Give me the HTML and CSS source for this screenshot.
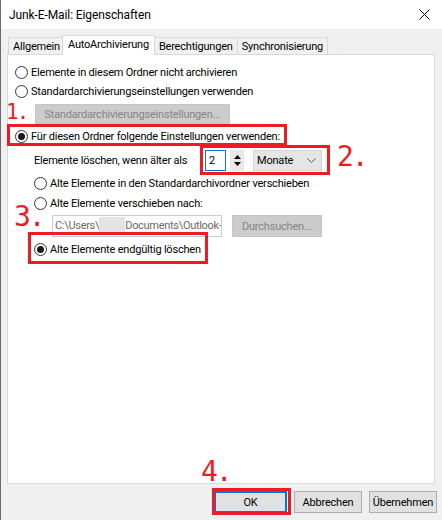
FILE: index.html
```html
<!DOCTYPE html>
<html>
<head>
	<title>Junk-E-Mail: Eigenschaften</title>
	<meta charset="utf-8">
	<link rel="stylesheet" href="styles.css">
</head>
<body>

	<div class="window">

		<div class="titlebar">
			<span class="title">Junk-E-Mail: Eigenschaften</span>
			<svg class="close" width="11" height="11" viewBox="0 0 11 11">
				<path d="M0.5 0.5L10.5 10.5M10.5 0.5L0.5 10.5" stroke="#000" stroke-width="1"/>
			</svg>
		</div>

		<div class="tabs">
			<div class="tab">Allgemein</div>
			<div class="tab tab--active">AutoArchivierung</div>
			<div class="tab">Berechtigungen</div>
			<div class="tab">Synchronisierung</div>
		</div>

		<div class="panel">
			<div class="option">
				<span class="radio"></span>Elemente in diesem Ordner nicht archivieren
			</div>
			<div class="option">
				<span class="radio"></span>Standardarchivierungseinstellungen verwenden
			</div>
			<div class="btn btn--disabled btn--defaults">Standardarchivierungseinstellungen...</div>
			<div class="option option--gap">
				<span class="radio radio--checked"></span>Für diesen Ordner folgende Einstellungen verwenden:
			</div>

			<div class="age">
				<span class="age__label">Elemente löschen, wenn älter als</span>
				<span class="spin">2</span>
				<span class="spin__arrows">
					<svg width="7" height="4" viewBox="0 0 7 4"><path d="M0 4L3.5 0L7 4Z" fill="#000"/></svg>
					<svg width="7" height="4" viewBox="0 0 7 4"><path d="M0 0L3.5 4L7 0Z" fill="#000"/></svg>
				</span>
				<span class="select">
					Monate
					<svg width="9" height="5" viewBox="0 0 9 5"><path d="M0.5 0.5L4.5 4.5L8.5 0.5" fill="none" stroke="#555"/></svg>
				</span>
			</div>

			<div class="option option--sub">
				<span class="radio"></span>Alte Elemente in den Standardarchivordner verschieben
			</div>
			<div class="option option--sub option--tight">
				<span class="radio"></span>Alte Elemente verschieben nach:
			</div>

			<div class="path">
				<span class="path__field">C:\Users\<span class="path__hidden"></span>Documents\Outlook-</span>
				<span class="btn btn--disabled btn--browse">Durchsuchen...</span>
			</div>

			<div class="option option--sub">
				<span class="radio radio--checked"></span>Alte Elemente endgültig löschen
			</div>
		</div>

		<div class="footer">
			<span class="btn btn--ok">OK</span>
			<span class="btn">Abbrechen</span>
			<span class="btn">Übernehmen</span>
		</div>

		<!-- red markers drawn over the dialog -->
		<div class="mark mark--1"></div>
		<div class="mark mark--2"></div>
		<div class="mark mark--3"></div>
		<div class="mark mark--4"></div>
		<span class="num num--1">1.</span>
		<span class="num num--2">2.</span>
		<span class="num num--3">3.</span>
		<span class="num num--4">4.</span>

	</div>

</body>
</html>
```

FILE: styles.css
```css
/* * {outline: 1px solid red;} */

body {
	margin: 0;
	background: #f0f0f0;
	font-family: Roboto, "Noto Sans", sans-serif;
	font-size: 11px;
	letter-spacing: -0.2px;
	color: #000;
}

.window {
	position: relative;
	width: 442px;
	height: 520px;
	box-sizing: border-box;
	border-left: 1px solid #6b6b6b;
	background: #f0f0f0;
}

/* title bar */

.titlebar {
	height: 29px;
	background: #fff;
	display: flex;
	align-items: center;
	justify-content: space-between;
	padding: 0 12px 0 8px;
}

.title {
	font-size: 12px;
	letter-spacing: -0.1px;
}

/* tabs */

.tabs {
	display: flex;
	align-items: flex-end;
	height: 19px;
	margin-top: 6px;
	padding-left: 7px;
}

.tab {
	height: 17px;
	line-height: 17px;
	padding: 0 4px;
	border: 1px solid #d9d9d9;
	border-bottom: none;
	box-sizing: border-box;
	margin-right: -1px;
	background: #f0f0f0;
	white-space: nowrap;
}

.tab--active {
	height: 20px;
	line-height: 18px;
	padding: 0 5px;
	background: #fff;
	position: relative;
	z-index: 1;
	margin: 0 -1px -1px -2px;
}

/* content panel */

.panel {
	height: 430px;
	margin: 0 7px 0 6px;
	box-sizing: border-box;
	border: 1px solid #d9d9d9;
	background: #fff;
	padding: 8px 0 0 7px;
}

.option {
	display: flex;
	align-items: center;
	height: 19px;
	white-space: nowrap;
}

.option--gap {
	margin-top: 3px;
}

.option--sub {
	margin: 3px 0 0 19px;
}

.option--tight {
	margin-top: 1px;
}

.radio {
	width: 13px;
	height: 13px;
	box-sizing: border-box;
	border: 1px solid #333;
	border-radius: 50%;
	background: #fff;
	margin-right: 3px;
	display: flex;
	align-items: center;
	justify-content: center;
}

.radio--checked::after {
	content: "";
	width: 7px;
	height: 7px;
	border-radius: 50%;
	background: #1a1a1a;
}

/* buttons */

.btn {
	display: flex;
	align-items: center;
	justify-content: center;
	height: 22px;
	box-sizing: border-box;
	border: 1px solid #adadad;
	background: #e1e1e1;
	white-space: nowrap;
}

.btn--disabled {
	background: #cccccc;
	border-color: #c4c4c4;
	color: #858585;
}

.btn--defaults {
	width: 195px;
	height: 20px;
	margin: 3px 0 0 20px;
}

.btn--browse {
	width: 90px;
	margin-left: 10px;
}

/* age row */

.age {
	display: flex;
	align-items: center;
	height: 21px;
	margin: 4px 0 0 19px;
	white-space: nowrap;
}

.age__label {
	width: 171px;
}

.spin {
	width: 21px;
	height: 21px;
	box-sizing: border-box;
	border: 1px solid #0078d7;
	padding-left: 3px;
	line-height: 19px;
	background: #fff;
}

.spin__arrows {
	display: flex;
	flex-direction: column;
	align-items: center;
	justify-content: space-around;
	width: 14px;
	height: 21px;
	box-sizing: border-box;
	margin-left: 4px;
	padding: 3px 0;
	background: #e8e8e8;
}

.select {
	display: flex;
	align-items: center;
	justify-content: space-between;
	width: 69px;
	height: 21px;
	box-sizing: border-box;
	margin-left: 9px;
	padding: 0 5px 0 3px;
	background: #e5e5e5;
	border: 1px solid #d6d6d6;
}

/* path row */

.path {
	display: flex;
	height: 22px;
	margin: 2px 0 0 37px;
}

.path__field {
	width: 170px;
	height: 22px;
	box-sizing: border-box;
	border: 1px solid #c5cfdb;
	background: #fcfcfc;
	color: #6d6d6d;
	padding-left: 2px;
	line-height: 20px;
	letter-spacing: -0.3px;
	white-space: nowrap;
	overflow: hidden;
}

.path__hidden {
	display: inline-block;
	width: 26px;
	height: 18px;
	vertical-align: middle;
	background: #e4e4e4;
}

/* footer */

.footer {
	display: flex;
	justify-content: flex-end;
	gap: 7px;
	padding: 7px 5px 0 0;
}

.footer .btn {
	width: 68px;
}

.footer .btn--ok {
	width: 73px;
	border: 2px solid #0078d7;
}

/* red markers */

.mark {
	position: absolute;
	border: 3px solid #ed1c24;
	box-sizing: border-box;
}

.mark--1 { left: 6px; top: 124px; width: 280px; height: 22px; }
.mark--2 { left: 199px; top: 145px; width: 130px; height: 30px; }
.mark--3 { left: 27px; top: 232px; width: 180px; height: 32px; }
.mark--4 { left: 211px; top: 488px; width: 79px; height: 27px; }

.num {
	position: absolute;
	color: #ed1c24;
	font-family: "DejaVu Sans Mono", monospace;
	letter-spacing: -2px;
	line-height: 1;
}

.num--1 { left: 5px; top: 102px; font-size: 21px; }
.num--2 { left: 336px; top: 143px; font-size: 28px; }
.num--3 { left: 13px; top: 203px; font-size: 28px; }
.num--4 { left: 200px; top: 458px; font-size: 28px; }
```
